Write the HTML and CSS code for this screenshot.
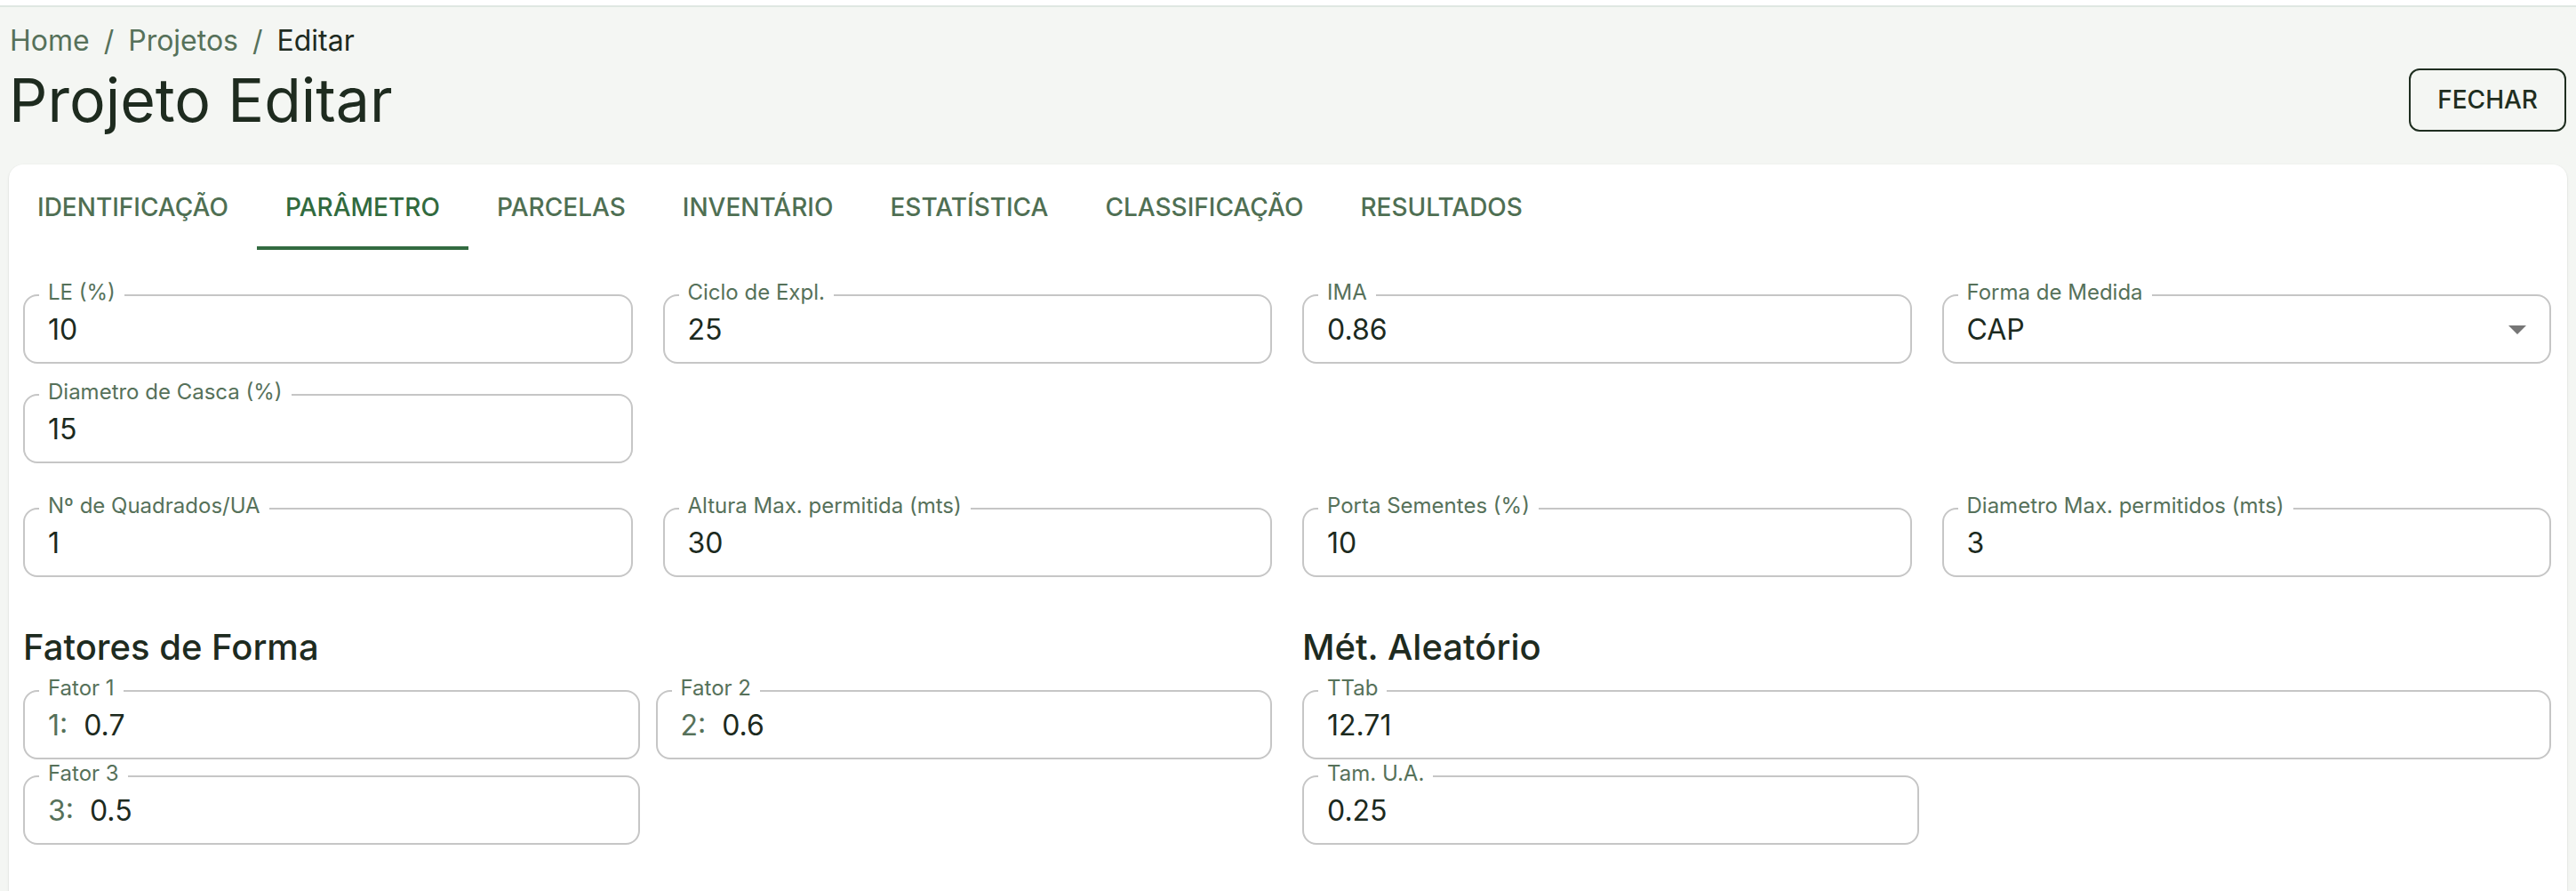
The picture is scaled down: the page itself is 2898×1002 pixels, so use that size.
FILE: index.html
```html
<!DOCTYPE html>
<html lang="pt-BR">
<head>
<meta charset="utf-8">
<title>Projeto Editar</title>
<link rel="stylesheet" href="styles.css">
</head>
<body>
<div class="topbar"></div>
<main class="page">
  <nav class="breadcrumb">
    <span class="crumb">Home</span><span class="sep">/</span><span class="crumb">Projetos</span><span class="sep">/</span><span class="crumb current">Editar</span>
  </nav>
  <div class="title-row">
    <h1 class="title">Projeto Editar</h1>
    <button class="btn-outline">FECHAR</button>
  </div>

  <section class="card">
    <div class="tabs">
      <div class="tab">IDENTIFICAÇÃO</div>
      <div class="tab active">PARÂMETRO</div>
      <div class="tab">PARCELAS</div>
      <div class="tab">INVENTÁRIO</div>
      <div class="tab">ESTATÍSTICA</div>
      <div class="tab">CLASSIFICAÇÃO</div>
      <div class="tab">RESULTADOS</div>
    </div>

    <div class="panel">
      <div class="grid4">
        <div class="field"><span class="label">LE (%)</span><span class="value">10</span></div>
        <div class="field"><span class="label">Ciclo de Expl.</span><span class="value">25</span></div>
        <div class="field"><span class="label">IMA</span><span class="value">0.86</span></div>
        <div class="field select"><span class="label">Forma de Medida</span><span class="value">CAP</span>
          <svg class="arrow" viewBox="0 0 24 24" width="48" height="48"><path d="M7 10l5 5 5-5z"/></svg>
        </div>
        <div class="field"><span class="label">Diametro de Casca (%)</span><span class="value">15</span></div>
      </div>

      <div class="grid4 second">
        <div class="field"><span class="label">Nº de Quadrados/UA</span><span class="value">1</span></div>
        <div class="field"><span class="label">Altura Max. permitida (mts)</span><span class="value">30</span></div>
        <div class="field"><span class="label">Porta Sementes (%)</span><span class="value">10</span></div>
        <div class="field"><span class="label">Diametro Max. permitidos (mts)</span><span class="value">3</span></div>
      </div>

      <div class="lower">
        <div class="group">
          <h2 class="heading">Fatores de Forma</h2>
          <div class="grid2">
            <div class="field"><span class="label">Fator 1</span><span class="prefix">1:</span><span class="value">0.7</span></div>
            <div class="field"><span class="label">Fator 2</span><span class="prefix">2:</span><span class="value">0.6</span></div>
            <div class="field"><span class="label">Fator 3</span><span class="prefix">3:</span><span class="value">0.5</span></div>
          </div>
        </div>
        <div class="group">
          <h2 class="heading">Mét. Aleatório</h2>
          <div class="grid2">
            <div class="field wide"><span class="label">TTab</span><span class="value">12.71</span></div>
            <div class="field"><span class="label">Tam. U.A.</span><span class="value">0.25</span></div>
          </div>
        </div>
      </div>
    </div>
  </section>
</main>
</body>
</html>
```

FILE: styles.css
```css
* { box-sizing: border-box; }

html, body {
  margin: 0;
  padding: 0;
}

body {
  background: #f4f6f3;
  font-family: Inter, "Noto Sans", "Liberation Sans", sans-serif;
  color: #1e2b1f;
  overflow: hidden;
}

.topbar {
  height: 8px;
  background: #ffffff;
  border-bottom: 2px solid #dfe7e2;
}

.page {
  padding: 0 10px;
}

.breadcrumb {
  margin-top: 14px;
  font-size: 32px;
  line-height: 48px;
  padding-left: 1px;
  color: #56715a;
}

.sep {
  margin: 0 16px;
  color: #56715a;
}

.crumb.current {
  color: #1e2b1f;
}

.title-row {
  display: flex;
  justify-content: space-between;
  align-items: center;
}

.title {
  margin: 0;
  font-size: 68px;
  line-height: 84px;
  font-weight: 400;
  color: #1e2b1f;
}

.btn-outline {
  height: 71px;
  padding: 0 30px;
  background: transparent;
  border: 2px solid #1f2e20;
  border-radius: 12px;
  font-family: inherit;
  font-size: 28px;
  font-weight: 500;
  color: #1f2e20;
  margin-right: 1px;
}

.card {
  margin-top: 31px;
  background: #ffffff;
  border-radius: 16px;
  box-shadow: 0 1px 3px rgba(0, 0, 0, 0.10), 0 1px 2px rgba(0, 0, 0, 0.06);
  min-height: 900px;
}

.tabs {
  display: flex;
  height: 96px;
}

.tab {
  display: flex;
  align-items: center;
  padding: 0 32px;
  font-size: 28px;
  font-weight: 500;
  color: #4f6f53;
}

.tab.active {
  color: #316a3e;
  box-shadow: inset 0 -4px 0 #336b40;
}

.panel {
  padding: 50px 18px 60px 16px;
}

.grid4 {
  display: grid;
  grid-template-columns: repeat(4, 1fr);
  gap: 34px;
}

.grid4.second {
  margin-top: 50px;
}

.lower {
  display: grid;
  grid-template-columns: 1fr 1fr;
  column-gap: 34px;
  margin-top: 55px;
}

.heading {
  margin: 0 0 24px;
  font-size: 40px;
  line-height: 48px;
  font-weight: 500;
  color: #1e2b1f;
}

.grid2 {
  display: grid;
  grid-template-columns: 1fr 1fr;
  gap: 18px;
}

.field.wide {
  grid-column: span 2;
}

.field {
  position: relative;
  height: 78px;
  border: 2px solid #c6c6c6;
  border-radius: 16px;
  display: flex;
  align-items: center;
  padding: 0 26px;
  background: #ffffff;
}

.label {
  position: absolute;
  top: -16px;
  left: 16px;
  padding: 0 10px;
  background: #ffffff;
  font-size: 24px;
  line-height: 24px;
  color: #56715a;
  white-space: nowrap;
}

.value {
  font-size: 32px;
  color: #1c2a1e;
}

.prefix {
  font-size: 32px;
  color: #56715a;
  margin-right: 18px;
}

.arrow {
  margin-left: auto;
  margin-right: -14px;
  fill: #767676;
}
```
